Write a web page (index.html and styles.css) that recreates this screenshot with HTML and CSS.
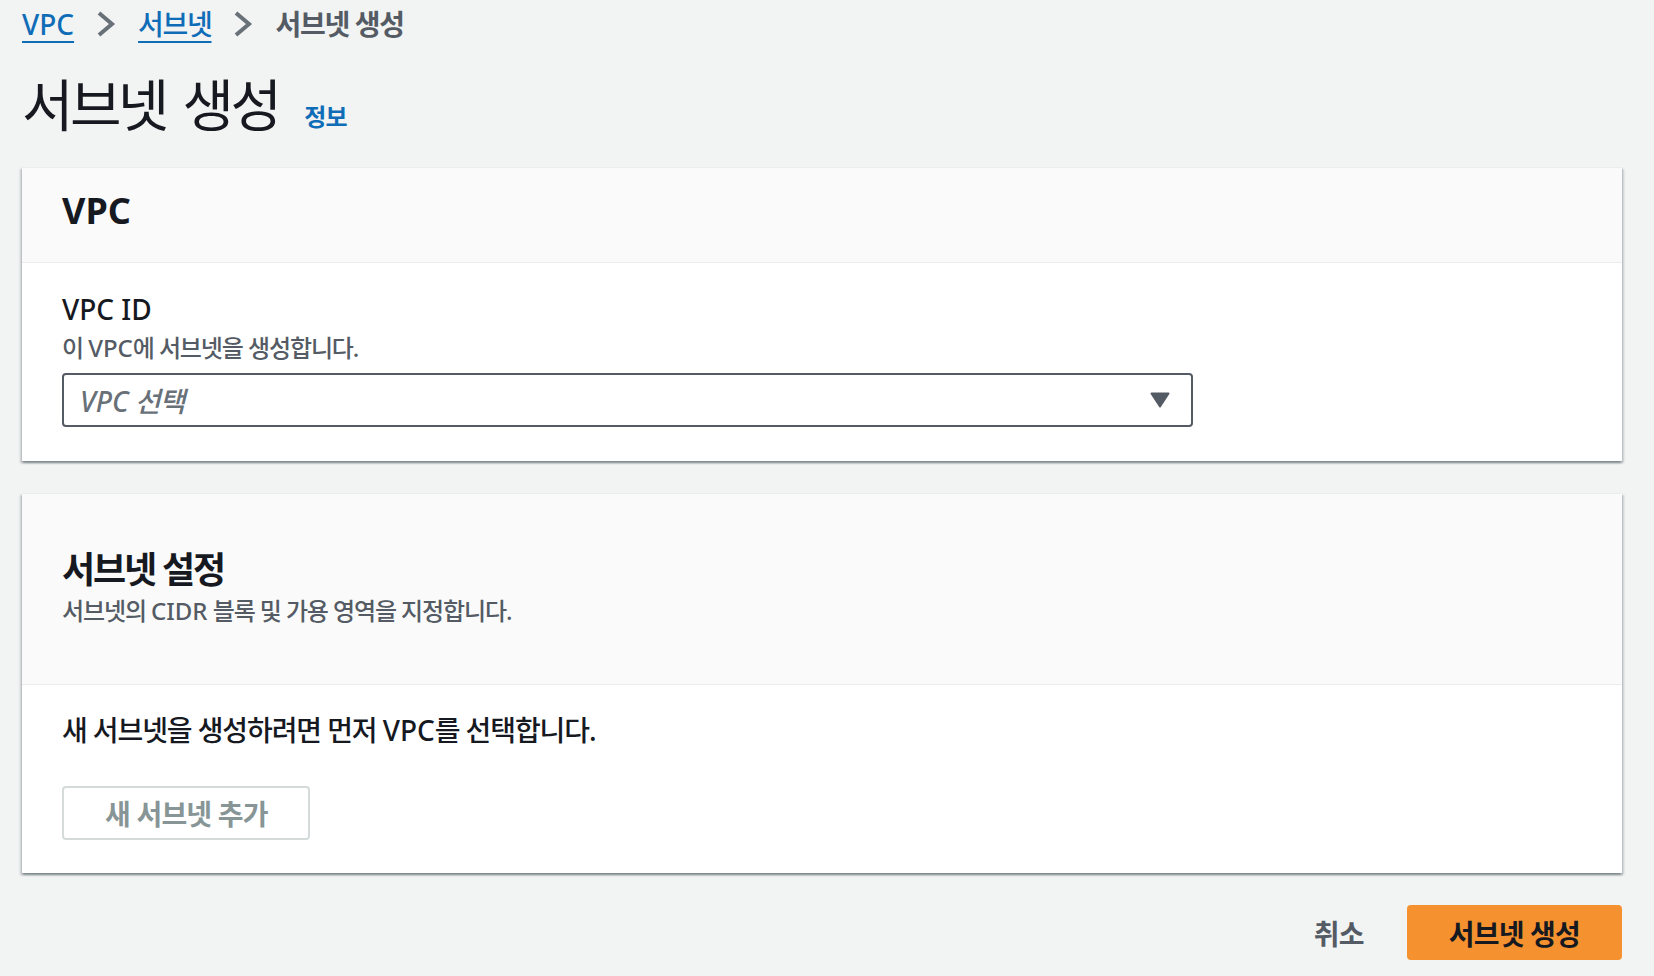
FILE: index.html
```html
<!DOCTYPE html>
<html lang="ko">
<head>
<meta charset="utf-8">
<title>서브넷 생성</title>
<link rel="stylesheet" href="styles.css">
</head>
<body>
<div class="page">
  <nav class="breadcrumbs">
    <a class="crumb-link lat" href="#">VPC</a>
    <svg class="crumb-sep" width="20" height="28" viewBox="0 0 20 28"><polyline points="3,3 16,14 3,25" fill="none" stroke="#687078" stroke-width="4"/></svg>
    <a class="crumb-link" href="#">서브넷</a>
    <svg class="crumb-sep" width="20" height="28" viewBox="0 0 20 28"><polyline points="3,3 16,14 3,25" fill="none" stroke="#687078" stroke-width="4"/></svg>
    <span class="crumb-current">서브넷 생성</span>
  </nav>

  <header class="page-header">
    <h1 class="page-title">서브넷 생성</h1>
    <a class="info-link" href="#">정보</a>
  </header>

  <section class="container">
    <div class="container-header">
      <h2 class="container-title lat">VPC</h2>
    </div>
    <div class="container-body">
      <label class="field-label lat">VPC ID</label>
      <p class="field-desc">이 <span class="lat">VPC</span>에 서브넷을 생성합니다.</p>
      <div class="select">
        <span class="select-placeholder"><span class="lat">VPC</span> 선택</span>
        <svg class="select-caret" width="20" height="16" viewBox="0 0 20 16"><polygon points="1.5,1.5 18.5,1.5 10,14.5" fill="#545b64" stroke="#545b64" stroke-width="2" stroke-linejoin="round"/></svg>
      </div>
    </div>
  </section>

  <section class="container container-second">
    <div class="container-header header-tall">
      <h2 class="container-title title-ko">서브넷 설정</h2>
      <p class="header-desc">서브넷의 <span class="lat">CIDR</span> 블록 및 가용 영역을 지정합니다.</p>
    </div>
    <div class="container-body body-second">
      <p class="body-text">새 서브넷을 생성하려면 먼저 <span class="lat">VPC</span>를 선택합니다.</p>
      <button class="btn-secondary" disabled>새 서브넷 추가</button>
    </div>
  </section>

  <div class="actions">
    <button class="btn-link">취소</button>
    <button class="btn-primary">서브넷 생성</button>
  </div>
</div>
</body>
</html>
```

FILE: styles.css
```css
html, body {
  margin: 0;
  background: #f2f3f3;
}

body {
  font-family: "Noto Sans", "Noto Sans CJK KR", sans-serif;
  font-feature-settings: "palt";
  letter-spacing: -1.1px;
  color: #16191f;
}

.lat {
  letter-spacing: 0;
}

.page {
  padding: 4px 32px 0 22px;
}

.breadcrumbs {
  display: flex;
  align-items: center;
  gap: 22px;
  height: 40px;
  font-size: 28px;
  line-height: 40px;
  font-weight: 500;
  letter-spacing: -1.3px;
}

.crumb-link {
  color: #0f6db8;
  text-decoration: underline;
  text-decoration-thickness: 2px;
  text-underline-offset: 6px;
}

.crumb-link.lat {
  letter-spacing: 0;
}

.crumb-sep {
  display: block;
  flex: none;
}

.crumb-current {
  color: #545b64;
  font-weight: 700;
}

.page-header {
  display: flex;
  align-items: baseline;
  gap: 26px;
  margin-top: 25px;
}

.page-title {
  margin: 0;
  font-size: 56px;
  font-weight: 400;
  line-height: 70px;
  letter-spacing: -3.64px;
  word-spacing: 6px;
}

.info-link {
  font-size: 24px;
  font-weight: 700;
  color: #0f6db8;
  text-decoration: none;
  letter-spacing: -0.8px;
}

.container {
  margin-top: 28px;
  background: #ffffff;
  border-top: 1px solid #eaeded;
  box-shadow: 0 2px 2px 0 rgba(0, 28, 36, 0.3),
              2px 2px 2px 0 rgba(0, 28, 36, 0.15),
              -2px 2px 2px 0 rgba(0, 28, 36, 0.15);
}

.container-second {
  margin-top: 32px;
}

.container-header {
  background: #fafafa;
  border-bottom: 1px solid #eaeded;
  padding: 21px 40px 29px;
}

.header-tall {
  padding: 54px 40px 57px;
}

.container-title {
  margin: 0;
  font-size: 36px;
  font-weight: 700;
  line-height: 44px;
}

.title-ko {
  letter-spacing: -2.16px;
}

.header-desc {
  margin: 3px 0 0;
  font-size: 24px;
  line-height: 32px;
  font-weight: 500;
  color: #545b64;
}

.container-body {
  padding: 26px 40px 34px;
}

.body-second {
  padding: 25px 40px 33px;
}

.field-label {
  display: block;
  font-size: 28px;
  line-height: 40px;
  font-weight: 500;
}

.field-desc {
  margin: 3px 0 0;
  font-size: 24px;
  line-height: 32px;
  font-weight: 500;
  color: #545b64;
}

.select {
  margin-top: 9px;
  width: 1131px;
  height: 54px;
  box-sizing: border-box;
  border: 2px solid #545b64;
  border-radius: 4px;
  display: flex;
  align-items: center;
  justify-content: space-between;
  padding: 0 21px 0 16px;
  background: #ffffff;
}

.select-placeholder {
  font-size: 28px;
  font-style: italic;
  font-weight: 500;
  color: #687078;
}

.select-caret {
  display: block;
}

.body-text {
  margin: 0;
  font-size: 28px;
  line-height: 40px;
  font-weight: 500;
}

.btn-secondary {
  display: block;
  margin-top: 36px;
  height: 54px;
  padding: 0 40px 0 41px;
  border: 2px solid #d5dbdb;
  border-radius: 4px;
  background: #ffffff;
  color: #879596;
  font-family: inherit;
  font-feature-settings: "palt";
  letter-spacing: -0.8px;
  font-size: 28px;
  font-weight: 700;
}

.actions {
  display: flex;
  justify-content: flex-end;
  align-items: center;
  gap: 43px;
  margin-top: 32px;
}

.btn-link {
  background: none;
  border: 0;
  padding: 0;
  font-family: inherit;
  font-feature-settings: "palt";
  letter-spacing: -0.8px;
  font-size: 28px;
  font-weight: 700;
  color: #545b64;
}

.btn-primary {
  height: 55px;
  padding: 0 42px;
  border: 0;
  border-radius: 4px;
  background: #f5922f;
  color: #16191f;
  font-family: inherit;
  font-feature-settings: "palt";
  letter-spacing: -0.8px;
  font-size: 28px;
  font-weight: 700;
}
```
